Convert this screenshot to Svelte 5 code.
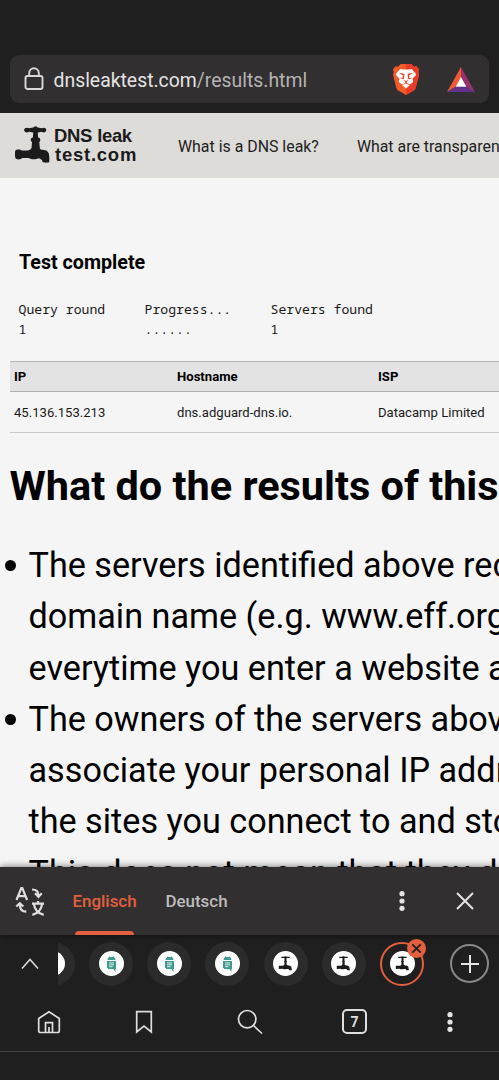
<script>
  const tabs = [
    { icon: 'android' },
    { icon: 'android' },
    { icon: 'android' },
    { icon: 'android' },
    { icon: 'tap' },
    { icon: 'tap' },
    { icon: 'tap', active: true }
  ];

  const progress = [
    { label: 'Query round', value: '1' },
    { label: 'Progress...', value: '......' },
    { label: 'Servers found', value: '1' }
  ];

  const answers = [
    [
      'The servers identified above receive a request',
      'domain name (e.g. www.eff.org) to an IP',
      'everytime you enter a website address'
    ],
    [
      'The owners of the servers above have the',
      'associate your personal IP address with',
      'the sites you connect to and store this'
    ],
    ['This does not mean that they do log']
  ];
</script>

<div class="phone">
  <div class="top">
    <div class="address">
      <svg class="lock" width="20" height="24" viewBox="0 0 20 24">
        <rect x="1.500" y="9" width="17" height="13" rx="2" />
        <path d="M5.200 9V6a4.800 4.800 0 0 1 9.600 0v3" />
      </svg>
      <div class="url">dnsleaktest.com<span>/results.html</span></div>
      <svg class="brave" width="26" height="31" viewBox="0 0 26 31">
        <path fill="#f15a29" d="M7.500 0h11l2.300 2.700 2.700-.4 2.500 3.300-.7 2.700.8 2.500-3.400 13c-.4 1.500-1.200 2.300-2.300 3L13 31l-7.400-4.200c-1.100-.7-1.900-1.500-2.300-3L0 10.800l.7-2.500L0 5.600l2.500-3.300 2.700.4z" />
        <path fill="#e93b25" d="M13 0h5.500l2.300 2.700 2.700-.4 2.500 3.300-.7 2.700.8 2.500-3.400 13c-.4 1.500-1.200 2.300-2.300 3L13 31z" />
        <path fill="#fff" d="m7.200 4.900 3.100.6h5.400l3.100-.6 3.900 4.700c.5.800.3 1.500-.2 2l-3 3.200.6 2.200c.2.800-.3 1.500-1 2l-2.400 1.500-3.700-1.900-3.700 1.900-2.400-1.500c-.7-.5-1.200-1.200-1-2l.6-2.200-3-3.200c-.5-.5-.7-1.200-.2-2zM9.200 21.300l3.800-1.900 3.800 1.900-3.800 3.200z" />
        <path fill="#e94629" d="m5.500 8.800 4.800.7 1.200 1-.6 3 .5 1.300-1.700.4-3-1.500 2.900.3.200-2.800zM20.500 8.800l-4.800.7-1.200 1 .6 3-.5 1.300 1.700.4 3-1.500-2.900.3-.2-2.800zM10.300 15.800 13 17l2.700-1.200-1.900 2.300v1h-1.600v-1z" />
      </svg>
      <svg class="bat" width="28" height="25" viewBox="0 0 28 25">
        <path fill="#f15a31" d="M14 0 0 25l9-5.500 5-9z" />
        <path fill="#97306d" d="m14 0 14 25-9-5.500-5-9z" />
        <path fill="#63308b" d="M0 25h28l-9-5.500H9z" />
        <path fill="#fff" d="m14 10-5.300 9.800h10.600z" />
      </svg>
    </div>
  </div>

  <div class="page">
    <header>
      <div class="logo">
        <svg width="35" height="37" viewBox="0 0 35 37" fill="#1b1b1b">
          <path d="M18.300 1.600C18.700 0 22.300 0 22.700 1.600l4 .7c1.500-1.300 4.600-.7 4.600 1.800s-3.100 3.200-4.600 1.700l-3.900.8.300 4.900c1.900.5 2.700 1.700 2 3.300l-.8 1.800.6 6.200c1.900 1.800 5.100.6 7.300 2.400 1.700 1.400 2.100 3.600 2.100 6v4.600c0 1.200-6.600 1.200-6.800 0-.3-2.500-1.900-2.800-3.800-3.600-2.400 1.400-7.600 1.500-10-.2-2.200.2-4.700.1-6.700 0-1.300 2-5.500 1.600-6.500.3-.7-1.500-.7-6.800 0-8 1-1.100 4.800-1.200 6.200.1 3.200.5 8.800.3 9.800-2.500l.5-5.300-1-1.800c-.8-1.600.1-2.800 1.900-3.300l.3-4.900-4.200-.8c-1.500 1.500-4.900.8-4.900-1.700s3.400-3.100 4.900-1.800z" />
        </svg>
        <div class="brand">
          <div><span class="dns">DNS</span> <span class="leak">leak</span></div>
          <div class="com">test.com</div>
        </div>
      </div>
      <nav>
        <a href="#leak">What is a DNS leak?</a>
        <a href="#proxy">What are transparent DNS proxies?</a>
      </nav>
    </header>

    <h2>Test complete</h2>

    <div class="progress">
      {#each progress as item}
        <div>{item.label}<br />{item.value}</div>
      {/each}
    </div>

    <div class="table">
      <div class="row head">
        <div>IP</div>
        <div>Hostname</div>
        <div>ISP</div>
      </div>
      <div class="row">
        <div>45.136.153.213</div>
        <div>dns.adguard-dns.io.</div>
        <div>Datacamp Limited</div>
      </div>
    </div>

    <h1>What do the results of this test mean?</h1>
    <ul>
      {#each answers as lines}
        <li>
          {#each lines as line}<div>{line}</div>{/each}
        </li>
      {/each}
    </ul>
  </div>

  <div class="translate">
    <svg class="lang" width="30" height="30" viewBox="0 0 30 30">
      <path d="m1.500 14 4.800-12h1l4.800 12M3.200 10.200h7.200M17 3.500c4 0 6.500 2.200 6.500 6M20 7.300l3.500 3.500 3.200-3.500M1.300 20.500l3.500-3.300 3.500 3.300M4.800 18.500c0 5 2.300 7.100 6.500 7.100M17 17.700h12M23 15v2.700M18.800 17.700c.8 6 4.500 10 9.900 11.200M27.200 17.700c-.8 6-4.500 10-9.900 11.200" />
    </svg>
    <div class="choice selected">Englisch</div>
    <div class="choice">Deutsch</div>
    <svg class="dots" width="6" height="20" viewBox="0 0 6 20">
      <circle cx="3" cy="2.700" r="2.600" /><circle cx="3" cy="10" r="2.600" /><circle cx="3" cy="17.300" r="2.600" />
    </svg>
    <svg class="cross" width="18" height="18" viewBox="0 0 18 18">
      <path d="m1 1 16 16M17 1 1 17" />
    </svg>
  </div>

  <div class="tabs">
    <svg class="up" width="18" height="12" viewBox="0 0 18 12"><path d="m1 10.500 8-9 8 9" /></svg>
    <div class="strip">
      {#each tabs as tab}
        <div class="tab" class:active={tab.active}>
          <div class="favicon">
            {#if tab.icon === 'tap'}
              <svg width="15" height="15" viewBox="0 0 15 15" fill="#1b1b1b">
                <path d="M3.300.8h3l.5-.6h1.300l.5.600h3.100v1.300H8.500v2.700l.5.700-.5.900.2 2.400c.5.900 4.300.6 4.700 2.400l.5 3h-2.600c-.3-1.200-1.300-1.500-2.700-1.100-1.400.4-3 .3-4.200-.3L.8 13V9.700h3.100c1.500 0 2.400-.5 2.500-1.500l.1-1.800-.5-.9.500-.7V2.100H3.300z" />
              </svg>
            {:else}
              <svg width="9" height="16" viewBox="0 0 9 16">
                <path fill="#409b90" d="M.5 4.100C.6 2.600 1.200 1.600 2.200 1.100L1.700.2h.7l.5.700h3.200l.5-.7h.7l-.5.900c1 .5 1.600 1.500 1.700 3zM0 4.900h9V13h-.5v2.900L6.300 13H1v-1H0z" />
                <path d="M2 6.900h5M2 8.800h5M2 10.700h3.500" stroke="#fff" stroke-width=".8" />
              </svg>
            {/if}
          </div>
          {#if tab.active}
            <div class="close">
              <svg width="11" height="11" viewBox="0 0 11 11"><path d="m1.300 1.300 8.400 8.400M9.700 1.300 1.300 9.700" /></svg>
            </div>
          {/if}
        </div>
      {/each}
    </div>
    <div class="add">
      <svg width="18" height="18" viewBox="0 0 18 18"><path d="M9 0v18M0 9h18" /></svg>
    </div>
  </div>

  <div class="bottom">
    <svg class="home" width="24" height="24" viewBox="0 0 24 24">
      <path d="M1.700 8.500 12 1.700l10.300 6.800v12.300c0 1-.7 1.700-1.700 1.700H3.400c-1 0-1.700-.7-1.700-1.700zM8.500 22.500v-9.800h7v9.800M12 17v5.500" />
    </svg>
    <svg class="bookmark" width="24" height="24" viewBox="0 0 24 24">
      <path d="M4.700 1.700h14.600V22L12 16l-7.300 6z" />
    </svg>
    <svg class="search" width="26" height="26" viewBox="0 0 26 26">
      <circle cx="10.200" cy="10.200" r="8.700" /><path d="m16.500 16.500 8.500 8" />
    </svg>
    <div class="count">7</div>
    <svg class="dots" width="6" height="20" viewBox="0 0 6 20">
      <circle cx="3" cy="2.700" r="2.600" /><circle cx="3" cy="10" r="2.600" /><circle cx="3" cy="17.300" r="2.600" />
    </svg>
  </div>
  <div class="system"></div>
</div>

<style>
  :global(body) {
    margin: 0;
    overflow: hidden;
    background: #1f1f1f;
  }

  .phone {
    width: 100%;
    height: 1080px;
    display: flex;
    flex-direction: column;
    overflow: hidden;
    font-family: Roboto, sans-serif;
    background: #1f1f1f;
  }

  svg {
    display: block;
    flex: none;
  }

  /* address bar */
  .top {
    flex: none;
    height: 113px;
    padding: 55px 10px 10px;
    box-sizing: border-box;
  }

  .address {
    height: 48px;
    display: flex;
    align-items: center;
    background: #322f30;
    border-radius: 9px;
    color: #e4e3e3;
  }

  .lock {
    margin-left: 14px;
    fill: none;
    stroke: #d9d8d8;
    stroke-width: 1.9;
  }

  .url {
    flex: 1;
    margin-left: 9.500px;
    padding-top: 2px;
    font-size: 19.400px;
    white-space: nowrap;
  }

  .url span {
    color: #b5b4b4;
  }

  .brave {
    margin-right: 28px;
  }

  .bat {
    margin-right: 14px;
  }

  /* web page */
  .page {
    flex: none;
    height: 754px;
    overflow: hidden;
    background: #f5f5f5;
    color: #000;
    white-space: nowrap;
  }

  header {
    height: 65px;
    display: flex;
    align-items: center;
    background: #dddcd8;
    color: #222;
  }

  .logo {
    width: 163px;
    display: flex;
    align-items: center;
    flex: none;
    padding-left: 15px;
  }

  .logo svg {
    margin-top: -2px;
  }

  .brand {
    margin: -1px 0 0 4px;
    font-family: "Liberation Sans", Arial, sans-serif;
    font-weight: bold;
    font-size: 18.500px;
    line-height: 19px;
    color: #1b1b1b;
  }

  .dns {
    letter-spacing: -0.3px;
  }

  .leak {
    letter-spacing: -0.4px;
  }

  .com {
    margin-left: 1px;
    letter-spacing: 0.75px;
  }

  nav {
    display: flex;
    gap: 38px;
    padding-top: 1px;
  }

  nav a {
    color: #222;
    font-size: 15.900px;
    text-decoration: none;
  }

  h2 {
    margin: 73px 0 0 19px;
    font-size: 19.700px;
    line-height: 24px;
  }

  .progress {
    display: grid;
    grid-template-columns: 126px 126px 1fr;
    margin: 25px 0 0 18.500px;
    font-family: "Droid Sans Mono", "Noto Sans Mono", "DejaVu Sans Mono", monospace;
    font-size: 13.150px;
    line-height: 19.500px;
    color: #1a1a1a;
  }

  .table {
    margin: 22px 0 0 10px;
    border-top: 1px solid #b5b5b5;
    font-size: 13.100px;
  }

  .row {
    height: 40px;
    display: grid;
    grid-template-columns: 163px 201px 1fr;
    align-items: center;
    padding-left: 4px;
    border-bottom: 1px solid #c8c8c8;
    color: #1a1a1a;
  }

  .head {
    height: 29px;
    background: #e3e3e3;
    border-bottom-color: #b0b0b0;
    font-weight: bold;
    color: #000;
  }

  h1 {
    margin: 27px 0 0 9.500px;
    font-size: 41.450px;
    line-height: 52px;
  }

  ul {
    margin: 28px 0 0;
    padding-left: 28.500px;
    list-style: none;
    font-size: 34.200px;
    line-height: 51.300px;
  }

  li {
    position: relative;
  }

  li::before {
    content: "";
    position: absolute;
    left: -23.500px;
    top: 20px;
    width: 11px;
    height: 11px;
    border-radius: 50%;
    background: #000;
  }

  /* translate bar */
  .translate {
    position: relative;
    flex: none;
    height: 67.500px;
    display: flex;
    align-items: center;
    background: #322f30;
    box-shadow: 0 0 7px rgba(0, 0, 0, 0.6);
  }

  .lang {
    margin-left: 15px;
    fill: none;
    stroke: #e0dfdf;
    stroke-width: 2.2;
  }

  .choice {
    height: 100%;
    margin-left: 29px;
    padding-top: 1px;
    box-sizing: border-box;
    display: flex;
    align-items: center;
    font-size: 16.900px;
    font-weight: 500;
    color: #bdbcbc;
  }

  .selected {
    position: relative;
    margin-left: 27.500px;
    color: #e25f3f;
  }

  .selected::after {
    content: "";
    position: absolute;
    left: 2.500px;
    right: 2.500px;
    bottom: 0;
    height: 4px;
    border-radius: 4px 4px 0 0;
    background: #e25f3f;
  }

  .translate .dots {
    margin-left: auto;
  }

  .dots {
    fill: #e4e4e4;
  }

  .cross {
    margin: 0 25px 0 51px;
    stroke: #e4e4e4;
    stroke-width: 2;
  }

  /* tab strip */
  .tabs {
    flex: none;
    height: 58px;
    display: flex;
    align-items: center;
  }

  .up {
    margin: 0 19px 0 21px;
    fill: none;
    stroke: #dcdcdc;
    stroke-width: 1.5;
  }

  .strip {
    width: 383px;
    height: 100%;
    display: flex;
    align-items: center;
    justify-content: flex-end;
    gap: 14.200px;
    padding-right: 17px;
    box-sizing: border-box;
    overflow: hidden;
  }

  .tab {
    position: relative;
    flex: none;
    width: 44px;
    height: 44px;
    display: flex;
    align-items: center;
    justify-content: center;
    border-radius: 50%;
    background: #2b2b2b;
    box-sizing: border-box;
  }

  .active {
    border: 2px solid #e25f3f;
    background: none;
  }

  .favicon {
    width: 25px;
    height: 25px;
    display: flex;
    align-items: center;
    justify-content: center;
    border-radius: 50%;
    background: #fff;
  }

  .close {
    position: absolute;
    right: -4px;
    top: -4.500px;
    width: 19px;
    height: 19px;
    display: flex;
    align-items: center;
    justify-content: center;
    border-radius: 50%;
    background: #e25f3f;
  }

  .close svg {
    stroke: #1f1f1f;
    stroke-width: 1.8;
  }

  .add {
    width: 39px;
    height: 39px;
    display: flex;
    align-items: center;
    justify-content: center;
    margin-left: 9px;
    border: 2px solid #888;
    border-radius: 50%;
    box-sizing: border-box;
  }

  .add svg {
    stroke: #e4e4e4;
    stroke-width: 2;
  }

  /* bottom navigation */
  .bottom {
    flex: none;
    height: 58.500px;
    display: flex;
    align-items: center;
    border-bottom: 1px solid #434343;
  }

  .bottom svg:not(.dots) {
    fill: none;
    stroke: #dedede;
    stroke-width: 1.7;
  }

  .home {
    margin-left: 36.500px;
  }

  .bookmark {
    margin-left: 71.500px;
  }

  .search {
    margin-left: 80.500px;
  }

  .count {
    width: 25px;
    height: 25px;
    display: flex;
    align-items: center;
    justify-content: center;
    margin-left: 79.500px;
    border: 2px solid #dedede;
    border-radius: 5px;
    box-sizing: border-box;
    font-size: 14px;
    font-weight: bold;
    color: #dedede;
  }

  .bottom .dots {
    margin-left: 80px;
  }

  .system {
    flex: 1;
  }
</style>
